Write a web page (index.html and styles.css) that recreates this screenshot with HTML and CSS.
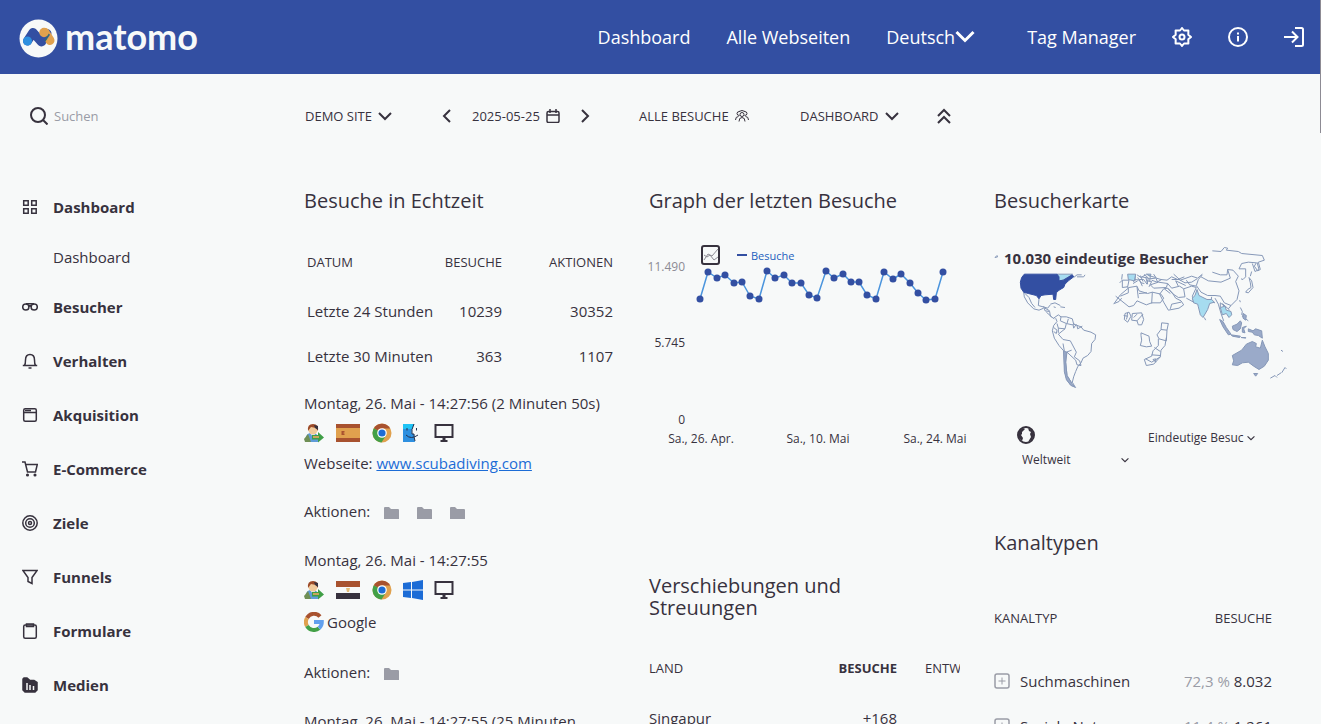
FILE: index.html
```html
<!DOCTYPE html>
<html lang="de">
<head>
<meta charset="utf-8">
<title>Matomo</title>
<link rel="stylesheet" href="styles.css">
</head>
<body>

<!-- shared icons -->
<svg class="sprite" aria-hidden="true">
  <symbol id="down" viewBox="0 0 14 14"><path d="M1 4l6 6 6-6" fill="none" stroke="currentColor" stroke-width="2"/></symbol>
  <symbol id="folder" viewBox="0 0 16 14"><path d="M1 2q0-1 1-1h4l2 2h7q1 0 1 1v9H1z" fill="#9a9ca6"/></symbol>
  <symbol id="chrome" viewBox="0 0 20 20">
    <circle cx="10" cy="10" r="9.500" fill="#e0a14e"/>
    <path d="M10 10L1.800 5.200A9.500 9.500 0 0 1 18.200 5.500H10z" fill="#a8522f"/>
    <path d="M10 10l4 2.500-4.500 7A9.500 9.500 0 0 1 1.800 5.200z" fill="#43a047"/>
    <circle cx="10" cy="10" r="4.800" fill="#fff"/><circle cx="10" cy="10" r="3.600" fill="#1c6cd6"/>
  </symbol>
  <symbol id="screen" viewBox="0 0 20 20"><path d="M1.500 2h17v12h-17z" fill="none" stroke="#37323e" stroke-width="2"/><path d="M8.500 14h3v3h2v2h-7v-2h2z" fill="#37323e"/></symbol>
  <symbol id="visitor" viewBox="0 0 20 20">
    <path d="M2 19v-4q0-4 4-5h4q4 1 4 5v4z" fill="#5f9bd8"/>
    <path d="M0 16l4-5 3 8H1z" fill="#6f8f55"/>
    <path d="M6 10l3 4 3-4z" fill="#e8eef2"/>
    <circle cx="9" cy="7" r="4.500" fill="#f0c99a"/>
    <path d="M4 8q-1-7 5-7 6 0 5 7l-2-3-5-1z" fill="#9c4a28"/><path d="M10 2l4 1v4l-3-2z" fill="#37323e"/>
    <path d="M8 12h6V9l6 5.500-6 5v-3H8z" fill="#3f9e46"/><path d="M9 13h6v2H9z" fill="#c9a55b"/>
  </symbol>
  <symbol id="plus" viewBox="0 0 16 16"><rect x="1" y="1" width="14" height="14" rx="2" fill="none" stroke="#9a9ca6" stroke-width="1.500"/><path d="M4.500 8h7M8 4.500v7" stroke="#9a9ca6"/></symbol>
</svg>

<header class="top">
  <a class="logo" href="#">
    <svg width="39" height="39" viewBox="0 0 39 39">
      <circle cx="19.500" cy="19.500" r="19" fill="#f7f9f9"/>
      <path d="M8.500 22L14 13.500L22.500 23L28 14.500" fill="none" stroke="#334fa2" stroke-width="9" stroke-linejoin="round" stroke-linecap="round"/>
      <path d="M26 13.500L31 21.500" stroke="#e0a14e" stroke-width="9" stroke-linecap="round"/>
      <path d="M22.500 23L28.500 14" stroke="#334fa2" stroke-width="6"/>
      <path d="M26 22l4-7" stroke="#2f7d5c" stroke-width="1"/>
      <circle cx="25" cy="13.500" r="4.700" fill="#e0a14e"/>
      <circle cx="8.500" cy="22" r="4.500" fill="#2e90e0"/>
    </svg>
    <span>matomo</span>
  </a>
  <nav class="top-nav">
    <a href="#">Dashboard</a>
    <a href="#">Alle Webseiten</a>
    <a href="#" class="lang">Deutsch<svg width="20" height="20" viewBox="0 0 20 20"><path d="M1.500 5l8.500 8.500L18.500 5" fill="none" stroke="#fff" stroke-width="3"/></svg></a>
    <a href="#">Tag Manager</a>
    <a href="#" aria-label="Administration"><svg width="20" height="20" viewBox="0 0 20 20" fill="none" stroke="#fff" stroke-width="2" stroke-linejoin="round"><path d="M10 1l2 2.500 4.400-.100-.100 4.300L19 10l-2.700 2.300.1 4.300-4.400-.100L10 19l-2-2.500-4.400.1.100-4.300L1 10l2.700-2.300-.100-4.300 4.400.1z"/><circle cx="10" cy="10" r="2.500"/></svg></a>
    <a href="#" aria-label="Hilfe"><svg width="20" height="20" viewBox="0 0 20 20" fill="none" stroke="#fff" stroke-width="2"><circle cx="10" cy="10" r="9"/><path d="M10 9v5.500M10 5.500v2"/></svg></a>
    <a href="#" aria-label="Anmelden"><svg width="20" height="20" viewBox="0 0 20 20" fill="none" stroke="#fff" stroke-width="2"><path d="M11 1h6.500q1.500 0 1.500 1.500v15q0 1.500-1.500 1.500H11M0 10h13M8 4.500l5.500 5.500L8 15.500"/></svg></a>
  </nav>
</header>

<div class="bar">
  <div class="search">
    <svg width="18" height="18" viewBox="0 0 18 18" fill="none" stroke="#37323e" stroke-width="2"><circle cx="8" cy="8" r="7"/><path d="M13 13l4.500 4.500"/></svg>
    <input type="text" placeholder="Suchen" aria-label="Suchen">
  </div>
  <div class="selectors">
    <div class="site"><button>Demo Site <svg class="i14"><use href="#down"/></svg></button></div>
    <div class="period">
      <button aria-label="Zurück"><svg width="9" height="14" viewBox="0 0 9 14"><path d="M8 1L2 7l6 6" fill="none" stroke="currentColor" stroke-width="2"/></svg></button>
      <button>2025-05-25 <svg class="i14" viewBox="0 0 14 14" fill="none" stroke="currentColor"><rect x="1" y="2.500" width="12" height="11" rx="1.500" stroke-width="1.500"/><path d="M1 6h12M4 0v4M10 0v4" stroke-width="1.500"/></svg></button>
      <button aria-label="Weiter"><svg width="9" height="14" viewBox="0 0 9 14"><path d="M1 1l6 6-6 6" fill="none" stroke="currentColor" stroke-width="2"/></svg></button>
    </div>
    <div class="segment"><button>Alle Besuche <svg class="i14" viewBox="0 0 14 14" fill="none" stroke="currentColor"><circle cx="7" cy="5.500" r="2"/><path d="M4 12.500q0-4 3-4t3 4M4.500 6.500q-2.500 0-2.500-2t2.500-2M9.500 6.500q2.500 0 2.500-2t-2.500-2M4 2.500q3-2 6 0M.5 11q0-3.500 3-3.500M13.500 11q0-3.500-3-3.500"/></svg></button></div>
    <div class="site"><button>Dashboard <svg class="i14"><use href="#down"/></svg></button></div>
    <button aria-label="Einklappen"><svg width="14" height="16" viewBox="0 0 14 16"><path d="M1 8l6-6 6 6M1 15l6-6 6 6" fill="none" stroke="currentColor" stroke-width="2"/></svg></button>
  </div>
</div>

<div class="page">
  <nav class="menu">
    <a href="#"><svg viewBox="0 0 16 16"><path d="M1.700 1.700h4.500v4.500H1.700zM9.700 1.700h4.500v4.500H9.700zM1.700 9.700h4.500v4.500H1.700zM9.700 9.700h4.500v4.500H9.700z"/></svg>Dashboard</a>
    <a href="#" class="sub">Dashboard</a>
    <a href="#"><svg viewBox="0 0 16 16"><circle cx="3.800" cy="8" r="3.100"/><circle cx="12.200" cy="8" r="3.100"/><path d="M4 4.800h8M7 8q0-1.500 1-1.500T9 8"/></svg>Besucher</a>
    <a href="#"><svg viewBox="0 0 16 16"><path d="M.8 12.500h14.400M2.500 12.500q1-1.500 1-5.500 0-5.500 4.500-5.500t4.500 5.500q0 4 1 5.500M6.500 15h3"/></svg>Verhalten</a>
    <a href="#"><svg viewBox="0 0 16 16"><rect x="1.700" y="1.700" width="12.600" height="12.600" rx="1.500"/><path d="M1.700 5.500h12.600M3 3.500h6"/></svg>Akquisition</a>
    <a href="#"><svg viewBox="0 0 16 16"><path d="M0 1h3l2.500 10h8L15.300 3.500H3.600"/><circle cx="5.500" cy="14" r=".8"/><circle cx="13" cy="14" r=".8"/></svg>E-Commerce</a>
    <a href="#"><svg viewBox="0 0 16 16"><circle cx="8" cy="8" r="7.200"/><circle cx="8" cy="8" r="4.300"/><circle cx="8" cy="8" r="1.500"/></svg>Ziele</a>
    <a href="#"><svg viewBox="0 0 16 16"><path d="M.9 1.500h14.200L10 8.500v6l-4-2v-4z"/></svg>Funnels</a>
    <a href="#"><svg viewBox="0 0 16 16"><rect x="1.700" y="2" width="12.600" height="13.200" rx="1.500"/><path d="M4.500 1h7v2.500h-7z"/></svg>Formulare</a>
    <a href="#"><svg viewBox="0 0 16 16"><path d="M2 1h3l3 2.500h4l3 2V13l-2 2H3l-2-2V2z" fill="#37323e"/><path d="M5 6v7M8 8v5M11.500 9v4" stroke="#f7f9f9"/></svg>Medien</a>
  </nav>

  <main class="widgets">
    <section>
      <h2>Besuche in Echtzeit</h2>
      <table class="live">
        <thead>
          <tr><th>Datum</th><th>Besuche</th><th>Aktionen</th></tr>
        </thead>
        <tbody>
          <tr><td>Letzte 24 Stunden</td><td>10239</td><td>30352</td></tr>
          <tr><td>Letzte 30 Minuten</td><td>363</td><td>1107</td></tr>
        </tbody>
      </table>
      <div class="visit">
        <div class="line">Montag, 26. Mai - 14:27:56 (2 Minuten 50s)</div>
        <div class="line icons">
          <svg class="i20"><use href="#visitor"/></svg>
          <svg class="flag" viewBox="0 0 24 18"><path d="M0 0h24v18H0z" fill="#a8522f"/><path d="M0 4h24v10H0z" fill="#e0a14e"/><path d="M5.500 7h3v1.500H7.500v1h1V11h-3z" fill="#a8522f"/></svg>
          <svg class="i20"><use href="#chrome"/></svg>
          <svg class="i20" viewBox="0 0 20 20"><path d="M0 1h11q-3 6-2 10h2q0 4 1 8H0z" fill="#2e90e0"/><path d="M0 1h11l-2 5H0z" fill="#1fc3f5"/><path d="M4 5v2.500M13.500 5v2.500M3 12q5 5 12 0M11 1q-3 6-2 10h2q0 4 1 7" fill="none" stroke="#23304d"/></svg>
          <svg class="i20"><use href="#screen"/></svg>
        </div>
        <div class="line">Webseite: <a href="#">www.scubadiving.com</a></div>
        <div class="line actions">Aktionen: <svg><use href="#folder"/></svg><svg><use href="#folder"/></svg><svg><use href="#folder"/></svg></div>
      </div>
      <div class="visit">
        <div class="line">Montag, 26. Mai - 14:27:55</div>
        <div class="line icons">
          <svg class="i20"><use href="#visitor"/></svg>
          <svg class="flag" viewBox="0 0 24 18"><path d="M0 0h24v6H0z" fill="#a8522f"/><path d="M0 12h24v6H0z" fill="#37323e"/><path d="M10 7h4l-1 4h-2z" fill="#e5bd79"/></svg>
          <svg class="i20"><use href="#chrome"/></svg>
          <svg class="i20" viewBox="0 0 20 20"><path d="M0 3l8-1v7.500H0zM9 2l11-2v9.500H9zM0 10.500h8V18l-8-1zM9 10.500h11V20L9 18z" fill="#1c6cd6"/></svg>
          <svg class="i20"><use href="#screen"/></svg>
        </div>
        <div class="line google">
          <svg class="i20" viewBox="0 0 20 20" fill="none" stroke-width="4"><path d="M16 4.500A8 8 0 0 0 3 6" stroke="#a8522f"/><path d="M3 6a8 8 0 0 0 0 8" stroke="#e0a14e"/><path d="M3 14a8 8 0 0 0 12 2.200" stroke="#43a047"/><path d="M15 16.200A8 8 0 0 0 17.800 10H10" stroke="#62a0ee"/></svg>
          Google
        </div>
        <div class="line actions">Aktionen: <svg><use href="#folder"/></svg></div>
      </div>
      <div class="visit"><div class="line">Montag, 26. Mai - 14:27:55 (25 Minuten</div></div>
    </section>

    <section>
      <h2>Graph der letzten Besuche</h2>
      <svg class="graph" viewBox="0 0 325 206">
        <defs><marker id="dot" viewBox="0 0 8 8" refX="4" refY="4" markerWidth="8" markerHeight="8" markerUnits="userSpaceOnUse"><circle cx="4" cy="4" r="3.500" fill="#334fa2"/></marker></defs>
        <rect x="57" y="2" width="17" height="18" rx="2" fill="none" stroke="#37323e" stroke-width="2"/>
        <path d="M59 16l4-6 4 2 6-7M59 11l3 2 3-2 4 5 4-3" fill="none" stroke="#8d8b94"/>
        <path d="M92 11h10" stroke="#334fa2" stroke-width="2"/>
        <text x="106" y="16" class="key">Besuche</text>
        <text x="40" y="27" class="end light">11.490</text>
        <text x="40" y="103" class="end">5.745</text>
        <text x="40" y="180" class="end">0</text>
        <text x="56" y="199" class="mid">Sa., 26. Apr.</text>
        <text x="173" y="199" class="mid">Sa., 10. Mai</text>
        <text x="290" y="199" class="mid">Sa., 24. Mai</text>
        <polyline points="55,55 63,28 72,34 80,31 89,39 97,38 105,52 114,55 122,27 130,34 139,31 147,39 156,39 164,51 172,54 181,27 189,34 198,30 206,38 214,38 222,51 231,55 239,28 248,35 256,30 265,39 273,49 281,56 290,55 298,28"/>
      </svg>
      <h2 class="second">Verschiebungen und Streuungen</h2>
      <div class="clip">
        <table class="movers">
          <thead>
            <tr><th>Land</th><th><b>Besuche</b></th><th>Entwicklung</th></tr>
          </thead>
          <tbody>
            <tr><td>Singapur</td><td>+168</td><td></td></tr>
          </tbody>
        </table>
      </div>
    </section>

    <section>
      <h2>Besucherkarte</h2>
      <div class="map">
        <svg viewBox="0 0 930 500">
          <g class="land">
            <path d="M682 62l26 2 10-12 10 2-4 6 36 4 10 6 62 6 6 14-18 6 6 22-8 4-10-14 6-10-24-2-20 4-8 16 20 0 0 24-8 8-6-2"/>
            <path d="M802 100l8 24 12-6-6-22"/>
            <path d="M682 126l24 8 20 0 2-16 16 2 16 18-8 16 10 28-6 26-18 18-20-8-12-20-16-2-22 0-20-10-14-20 6-18 12-14M648 140l22 12 38 4 28-12-8-26"/>
            <path d="M792 142l8 10 4 20-14 16-8-2 6-8 10-6-2-14zM800 124l-4 14"/>
            <path d="M412 150l20 0-4 20-16 2zM404 158l8-8M412 132l-2 16M452 132l-2 16 14 2 8 18M452 150l-8 4M456 134l12 8 14-8M462 148l14 0 10 14M470 140l20 4-4 18M478 132l14 14 20-2M486 152l14 2-8 16M490 136l22 6 6 14M506 132l8 12 14 4 18 2 14-10 18 8 20-8M500 150l16 6 14-8M458 142l10 16 10 2M466 136l8 18M482 140l6 22M496 138l-2 16M444 160l14-8"/>
            <path d="M386 222l20-28 26-22 24-4 6 14 26 8 14-4 26 6 8 12-10 14h-26l-16 6-28-12-10 14-14 4-40-32M406 198l24-10 0-14M456 170l4 34M502 186l-2 34M388 220l14-6 8-10M430 174l-4-6M462 190l24-2"/>
            <path d="M496 164l24-8 28 4-4 12-38 2zM524 192l12-16 12-2 14 14 10 16 16 8 8 12-14 10-32 6-14-24zM548 160l12 14 24-6 12 8 4 24-20 2-18-12-14-16M538 176l18 14M556 236l4-14 28-6"/>
            <path d="M560 148l22 0 18 10 20-2 16-10M566 132l20 18 34-12 18 6 14-12M596 176l24-8 14 4-12 26 4 18-22-12M604 150l10 14 20 4M580 168l-8-16 30 14"/>
            <path d="M420 250l12-4 6 12-10 18-10-8zM416 256l10 2 2-10M424 268l4-12M442 250l28-2 6 20-6 16-10 0-4-12-16-2zM456 272l18-20M446 262l10-10"/>
            <path d="M468 308l24 10 2 16 6 14-16 2-18-4 4-16-2-14zM530 278l20 2-4 20-18-2zM528 298l-12 16 6 12 22 6 2-32M544 322l-4 24-12 14-2 20-20 22-22 4-6-18 22-10 4-16 16-16 0-20M482 386l18 10 26-16M500 374l26 2M508 352l18 12M504 388l8-2 0 10z"/>
            <path d="M116 186l2 14 10 18 18 18 16 4 14-6M118 188l14 14 8 18 10 12M162 206l-2 20 14 4 14 4 8-10M176 228l4 14 14 2 2 14 12 8M180 234l14 8M184 246l16 14M196 222l14-4 16 8M226 230l14 2M206 230l6 2"/>
            <path d="M206 264l14-10 8 6 16 0 18 6 4 16 22 8 8 10 22 6 14 8-2 14-10 12-2 24-10 12-14 8-6 14-10 12-6 14-6 16-4 16 8 14-14-6-10-14-6-22-2-30-2-36-14-16-14-22-6-22 4-16 10-12-4-10M228 260l-2 12 18 8-4 16-20-2-4-14M244 280l18 4 6-4M250 266l-4 14M264 282l2 12 8-12M276 286l2 10 14-8M206 292l10 8-2 10-8-6M234 328l-14-16 20-16M220 308l0-14M234 328l22 4 18 34-6 14 16 12 4 14-12-2-4-14-26-24-10 0M246 366l-4 30 4 40 14 22M238 362l-4-22M244 366l16-6"/>
            <path d="M690 204l10 18 8 28 8 22M706 232l0-14 12 10M738 226l-8 10M658 262l4 8M766 232l6 12-2 10M776 250l-4 10M782 266l8 6M764 210l2 6M680 200l-2 14 12 4M712 220l22 20M888 360l6 4M856 444l14-8 6 6M876 436l12-8M890 428l10-16 4 4M266 142l10-8 14 0M276 140h20l4-6"/>
            <path d="M30 82l8-2-2-4z"/>
          </g>
          <path class="light" d="M216 132h46l-14 10-14 8-14 4zM428 132h24l-4 20-18-4zM484 132l14 0-2 6z"/>
          <path class="light" d="M636 178l6 18 24 12 14 0 8 8-14 4-6 18-14 24-8-8-6-24-2-8-12-4-4-14 8-8z"/>
          <path class="light" d="M706 232l14-4 4 12 14 4 2 10-8 8-8-12-12 4z"/>
          <path class="mid" d="M704 268l10 6 10 18 14 20-8 2-16-24zM738 314l28 4-2 4-22-4zM742 288l14-6 10-10 4 6-4 18-10 8-12-6zM772 292l12-4-8 8 4 12-8-2zM790 296l14 6 8-6 18 6 2 22-12-8-12-2-6-8-12-2zM768 322l14 0 0 2zM774 250l10 6-2 14-8-6z"/>
          <path class="mid" d="M742 376L770 360 784 342 802 334 814 340 812 350 826 354 832 330 840 350 850 370V390L838 408 822 418 806 408 790 396 772 398 758 406 742 404 746 392zM806 430h12l-6 8zM236 362l8 4-2 30 4 40 16 26 10 10-14-6-14-18-6-24z"/>
          <path class="dark" d="M118 132H216L222 140V152L235 150 262 134 266 140 250 152 240 162 236 172 222 180 214 188 212 208H206L204 192 180 194 168 196 162 206 154 196 130 190 116 186 108 174 106 156 110 142z"/>
        </svg>
        <div class="map-title">10.030 eindeutige Besucher</div>
      </div>
      <div class="map-controls">
        <div class="region">
          <svg width="18" height="18" viewBox="0 0 18 18"><circle cx="9" cy="9" r="8" fill="#f7f9f9" stroke="#37323e" stroke-width="2"/><path d="M2 5l4-3 2 1-3 3 0 2-1 1 2 3-1 3-3-3zM11 2l4 2 2 5-2 5-4 2 3-5-1-3 1-2-2-1z" fill="#37323e"/></svg>
          <label class="pick"><select aria-label="Region"><option>Weltweit</option></select><svg viewBox="0 0 14 14"><use href="#down"/></svg></label>
        </div>
        <label class="pick metric"><select aria-label="Metrik"><option>Eindeutige Besuc</option></select><svg viewBox="0 0 14 14"><use href="#down"/></svg></label>
      </div>
      <h2 class="channel">Kanaltypen</h2>
      <table class="channels">
        <thead>
          <tr><th>Kanaltyp</th><th>Besuche</th></tr>
        </thead>
        <tbody>
          <tr><td><svg class="i16"><use href="#plus"/></svg>Suchmaschinen</td><td><span>72,3 %</span> 8.032</td></tr>
          <tr><td><svg class="i16"><use href="#plus"/></svg>Soziale Netz…</td><td><span>11,4 %</span> 1.261</td></tr>
        </tbody>
      </table>
    </section>
  </main>
</div>
<div class="scroll-thumb"></div>

</body>
</html>
```
FILE: styles.css
```css
* {
  box-sizing: border-box;
}

body {
  margin: 0;
  height: 100vh;
  overflow: hidden;
  background: #f7f9f9;
  color: #37323e;
  font-family: "Open Sans", "Noto Sans", sans-serif;
  font-size: 15px;
}

a {
  color: inherit;
  text-decoration: none;
}

svg {
  flex: none;
}

.sprite {
  display: none;
}

.i14 { width: 14px; height: 14px; }
.i16 { width: 16px; height: 16px; }
.i20 { width: 20px; height: 20px; }

/* header */
.top {
  height: 74px;
  padding: 0 17px 0 19px;
  background: #334fa2;
  color: #fff;
  display: flex;
  align-items: center;
  justify-content: space-between;
}

.logo {
  display: flex;
  align-items: center;
  gap: 7px;
  padding-top: 3px;
  font: bold 36px/40px Lato, sans-serif;
  color: #f7f9f9;
}

.logo span {
  padding-bottom: 5px;
}

.top-nav {
  display: flex;
  align-items: center;
  gap: 36px;
  font-size: 18px;
}

.top-nav a {
  display: flex;
  align-items: center;
}

.lang {
  margin-right: 16px;
}

/* search and selectors */
.bar {
  display: flex;
  align-items: center;
  height: 84px;
}

.search {
  width: 305px;
  padding-left: 30px;
  display: flex;
  align-items: center;
  gap: 6px;
}

.search input {
  width: 180px;
  padding: 0;
  border: 0;
  background: none;
  font: 13px/20px "Open Sans", sans-serif;
}

.search input::placeholder {
  color: #9a9ca6;
}

.selectors, .period {
  display: flex;
  align-items: center;
}

.selectors button {
  display: flex;
  align-items: center;
  gap: 6px;
  padding: 0;
  border: 0;
  background: none;
  color: inherit;
  font: 13px/20px "Open Sans", sans-serif;
  text-transform: uppercase;
}

.site { width: 137px; }
.period { width: 197px; gap: 21px; }
.segment { width: 161px; }

/* left menu */
.page {
  display: flex;
}

.menu {
  width: 304px;
  padding: 22px 0 0 22px;
}

.menu a {
  display: flex;
  align-items: center;
  gap: 15px;
  height: 54px;
  font-weight: bold;
}

.menu .sub {
  height: 46px;
  padding-left: 31px;
  font-weight: normal;
}

.menu svg {
  width: 16px;
  height: 16px;
  fill: none;
  stroke: #37323e;
  stroke-width: 1.5;
}

/* widgets */
.widgets {
  flex: 1;
  display: grid;
  grid-template-columns: repeat(3, minmax(0, 1fr));
  gap: 34px;
  padding: 32px 16px 0 0;
}

h2 {
  margin: 0;
  font-size: 20px;
  font-weight: normal;
  line-height: 22px;
}

table {
  width: 100%;
  border-collapse: collapse;
}

th {
  padding: 0;
  font-size: 13px;
  font-weight: normal;
  text-transform: uppercase;
  text-align: right;
}

td {
  padding: 0;
  text-align: right;
}

th:first-child, td:first-child {
  text-align: left;
}

.live { margin: 23px 0 10px; }
.live th, .live td { padding: 0 2px 0 3px; }
.live th { height: 53px; }
.live th:last-child { width: 111px; }
.live td { height: 45px; }

.line {
  display: flex;
  align-items: center;
  height: 30px;
  white-space: pre;
}

.line a {
  color: #1c6cd6;
  text-decoration: underline;
}

.visit {
  margin-bottom: 19px;
}

.icons { gap: 11px; }
.flag { width: 24px; height: 18px; margin: 0 1px; }

.google {
  height: 34px;
  gap: 3px;
  white-space: normal;
}

.actions { margin-top: 18px; }
.actions svg { width: 16px; height: 14px; margin: 4px 8px 0 9px; }

.graph {
  display: block;
  width: 325px;
  height: 206px;
  margin: 32px 0 0 -4px;
}

.graph text {
  font-size: 12px;
  fill: #37323e;
}

.graph .light { fill: #8d8b94; }
.graph .end { text-anchor: end; }
.graph .mid { text-anchor: middle; }
.graph .key { font-size: 11px; fill: #1c5fbe; }

.graph polyline {
  fill: none;
  stroke: #4a94dd;
  stroke-width: 1.5;
  marker-start: url(#dot);
  marker-mid: url(#dot);
  marker-end: url(#dot);
}

.second { margin-top: 125px; padding-right: 48px; }

.clip {
  overflow: hidden;
  margin-top: 22px;
}

.movers { width: 368px; table-layout: fixed; }
.movers th { height: 54px; }
.movers td { height: 45px; }
.movers th:nth-child(2) { width: 110px; }
.movers th:last-child { width: 120px; padding-left: 28px; text-align: left; }

/* visitor map */
.map {
  position: relative;
  margin: 18px 0 0 -9px;
}

.map > svg {
  display: block;
  width: 310px;
  height: 167px;
}

.map path {
  fill: none;
  stroke: #8698b8;
  stroke-width: 3;
  stroke-linejoin: round;
}

.map .light { fill: #a6dcf0; }
.map .mid { fill: #9aaac9; }
.map .dark { fill: #334fa2; stroke: #334fa2; }

.map-title {
  position: absolute;
  left: 15px;
  top: 13px;
  padding: 0 4px;
  background: #f7f9f9;
  font-size: 15px;
  font-weight: bold;
  line-height: 30px;
  white-space: nowrap;
}

.map-controls {
  display: flex;
  justify-content: space-between;
  margin-top: 29px;
  padding: 0 50px 0 23px;
}

.region > svg {
  display: block;
}

.pick {
  display: flex;
  align-items: center;
  justify-content: space-between;
  width: 107px;
  height: 20px;
}

.region .pick { margin: 6px 0 0 5px; }
.metric { margin-top: 2px; }

.pick select {
  width: 96px;
  padding: 0;
  border: 0;
  background: none;
  color: inherit;
  appearance: none;
  font: 12px/20px "Open Sans", sans-serif;
}

.pick svg {
  width: 8px;
  height: 8px;
}

.channel { margin-top: 62px; }

.channels { width: 278px; margin-top: 37px; }
.channels th { height: 54px; }
.channels tbody tr:first-child td { height: 71px; }
.channels td { height: 20px; white-space: nowrap; }
.channels svg { margin-right: 10px; vertical-align: -2px; }
.channels span { color: #9a9ca6; }

.scroll-thumb {
  position: fixed;
  top: 0;
  right: 0;
  width: 1px;
  height: 133px;
  background: #8d8b94;
}
```
